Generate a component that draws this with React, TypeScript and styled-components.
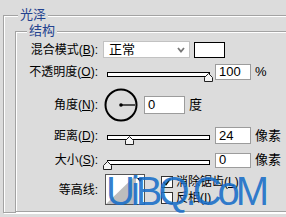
import styled, { createGlobalStyle } from "styled-components"

const GlobalStyle = createGlobalStyle`
  html, body {
    margin: 0;
    padding: 0;
    background: #dcdcdc;
    overflow: hidden;
  }
  body {
    font-family: "Liberation Sans", "Noto Sans CJK SC", sans-serif;
    font-size: 12px;
    line-height: 16px;
    color: #000;
  }
`

const Page = styled.div`
  position: relative;
  width: 286px;
  height: 217px;
  overflow: hidden;
`

const Group = styled.div<{ $left: number; $top: number; $width: number }>`
  margin-left: ${(p) => p.$left}px;
  margin-top: ${(p) => p.$top}px;
  width: ${(p) => p.$width}px;
  padding-left: 11px;
  border: 1px solid #a3a3a3;
  box-shadow: inset 1px 1px 0 #fff, 1px 1px 0 #fff;
`

const Title = styled.div<{ $indent: number }>`
  width: fit-content;
  margin-top: -9px;
  margin-left: ${(p) => p.$indent}px;
  padding: 0 2px;
  height: 16px;
  line-height: 16px;
  font-size: 13px;
  color: #23428f;
  background: #dcdcdc;
`

const Rows = styled.div`
  display: flex;
  flex-direction: column;
  padding-left: 1px;
  padding-bottom: 6px;
`

const Row = styled.div<{ $h: number; $mt: number }>`
  display: flex;
  align-items: center;
  height: ${(p) => p.$h}px;
  margin-top: ${(p) => p.$mt}px;
`

const Label = styled.div`
  width: 70px;
  flex-shrink: 0;
  margin-right: 5px;
  text-align: right;
  white-space: nowrap;
`

const Key = styled.span`
  text-decoration: underline;
  text-underline-offset: 1px;
`

const Select = styled.div`
  width: 87px;
  height: 17px;
  box-sizing: border-box;
  display: flex;
  align-items: center;
  justify-content: space-between;
  padding: 0 4px 0 5px;
  background: #fff;
  border: 1px solid #c2c2c2;
  font-size: 13px;
`

const Swatch = styled.div`
  width: 31px;
  height: 16px;
  box-sizing: border-box;
  margin-left: 4px;
  background: #fff;
  border: 1px solid #000;
`

const SliderBox = styled.div`
  position: relative;
  width: 109px;
  height: 100%;
  flex-shrink: 0;
`

const Track = styled.div`
  margin: 8px 0 0 4px;
  width: 101px;
  height: 3px;
  background: #fff;
  border: 1px solid #000;
`

const Thumb = styled.svg`
  position: absolute;
  top: 9px;
`

const Field = styled.div<{ $w: number; $h: number; $ml: number }>`
  width: ${(p) => p.$w}px;
  height: ${(p) => p.$h}px;
  margin-left: ${(p) => p.$ml}px;
  box-sizing: border-box;
  display: flex;
  align-items: center;
  padding-left: 3px;
  background: #fff;
  border: 1px solid #9c9c9c;
  font-size: 13px;
`

const Unit = styled.div`
  margin-left: 4px;
  font-size: 13px;
`

const Contour = styled.div`
  position: relative;
  width: 40px;
  height: 31px;
  margin-left: 2px;
  box-sizing: border-box;
  border: 1px solid #555;
  background: #fff;
`

const Checks = styled.div`
  display: flex;
  flex-direction: column;
  gap: 4px;
  margin-left: 16px;
  align-self: flex-start;
  margin-top: 2px;
`

const Check = styled.div`
  display: flex;
  align-items: center;
  gap: 3px;
  height: 12px;
`

const Box = styled.div`
  width: 12px;
  height: 12px;
  box-sizing: border-box;
  border: 1px solid #333;
  background: #fff;
  display: flex;
  align-items: center;
  justify-content: center;
`

const Watermark = styled.div`
  position: absolute;
  left: 106px;
  top: 171px;
  font-family: "Liberation Sans", sans-serif;
  font-size: 40px;
  line-height: 40px;
  letter-spacing: -4px;
  color: rgba(24, 110, 200, 0.9);
  white-space: nowrap;
`

const Slider = ({ pct }: { pct: number }) => (
  <SliderBox>
    <Track />
    <Thumb
      width="9"
      height="9"
      viewBox="0 0 9 9"
      style={{ left: 4 + pct * 101 - 4 }}
    >
      <path d="M4.5 0.5 L8.5 4.5 V8.5 H0.5 V4.5 Z" fill="#f4f4f4" stroke="#222" />
    </Thumb>
  </SliderBox>
)

const Dial = () => (
  <svg width="34" height="34" viewBox="0 0 34 34" style={{ marginLeft: 1 }}>
    <circle cx="17" cy="17" r="15.5" fill="none" stroke="#000" strokeWidth="2" />
    <line x1="17" y1="17" x2="31" y2="17" stroke="#000" strokeWidth="1.3" />
    <circle cx="17" cy="17" r="1.8" fill="#000" />
  </svg>
)

const Tick = () => (
  <svg width="10" height="10" viewBox="0 0 10 10">
    <path d="M1.5 5 L4 7.5 L8.5 1.5" fill="none" stroke="#000" strokeWidth="1.6" />
  </svg>
)

export default function App() {
  return (
    <Page>
      <GlobalStyle />
      <Group $left={3} $top={15} $width={330}>
        <Title $indent={3}>光泽</Title>
        <Group $left={0} $top={8} $width={300}>
          <Title $indent={0}>结构</Title>
          <Rows>
            <Row $h={17} $mt={2}>
              <Label>
                混合模式(<Key>B</Key>):
              </Label>
              <Select>
                <span>正常</span>
                <svg width="8" height="6" viewBox="0 0 8 6">
                  <path d="M1 1 L4 4.5 L7 1" fill="none" stroke="#777" strokeWidth="1.8" />
                </svg>
              </Select>
              <Swatch />
            </Row>
            <Row $h={16} $mt={6}>
              <Label>
                不透明度(<Key>O</Key>):
              </Label>
              <Slider pct={1} />
              <Field $w={36} $h={16} $ml={3}>
                100
              </Field>
              <Unit>%</Unit>
            </Row>
            <Row $h={34} $mt={8}>
              <Label>
                角度(<Key>N</Key>):
              </Label>
              <Dial />
              <Field $w={41} $h={18} $ml={6}>
                0
              </Field>
              <Unit>度</Unit>
            </Row>
            <Row $h={17} $mt={5}>
              <Label>
                距离(<Key>D</Key>):
              </Label>
              <Slider pct={0.22} />
              <Field $w={36} $h={17} $ml={3}>
                24
              </Field>
              <Unit>像素</Unit>
            </Row>
            <Row $h={16} $mt={8}>
              <Label>
                大小(<Key>S</Key>):
              </Label>
              <Slider pct={0} />
              <Field $w={36} $h={15} $ml={3}>
                0
              </Field>
              <Unit>像素</Unit>
            </Row>
            <Row $h={31} $mt={6}>
              <Label>等高线:</Label>
              <Contour>
                <svg width="38" height="29" viewBox="0 0 38 29">
                  <path d="M0 29 L30 0 V29 Z" fill="#bdbdbd" />
                  <path d="M31 3 H37 L34 7 Z" fill="#000" />
                </svg>
              </Contour>
              <Checks>
                <Check>
                  <Box>
                    <Tick />
                  </Box>
                  <span>
                    消除锯齿(<Key>L</Key>)
                  </span>
                </Check>
                <Check>
                  <Box />
                  <span>
                    反相(<Key>I</Key>)
                  </span>
                </Check>
              </Checks>
            </Row>
          </Rows>
        </Group>
      </Group>
      <Watermark>UiBQ.CoM</Watermark>
    </Page>
  )
}
